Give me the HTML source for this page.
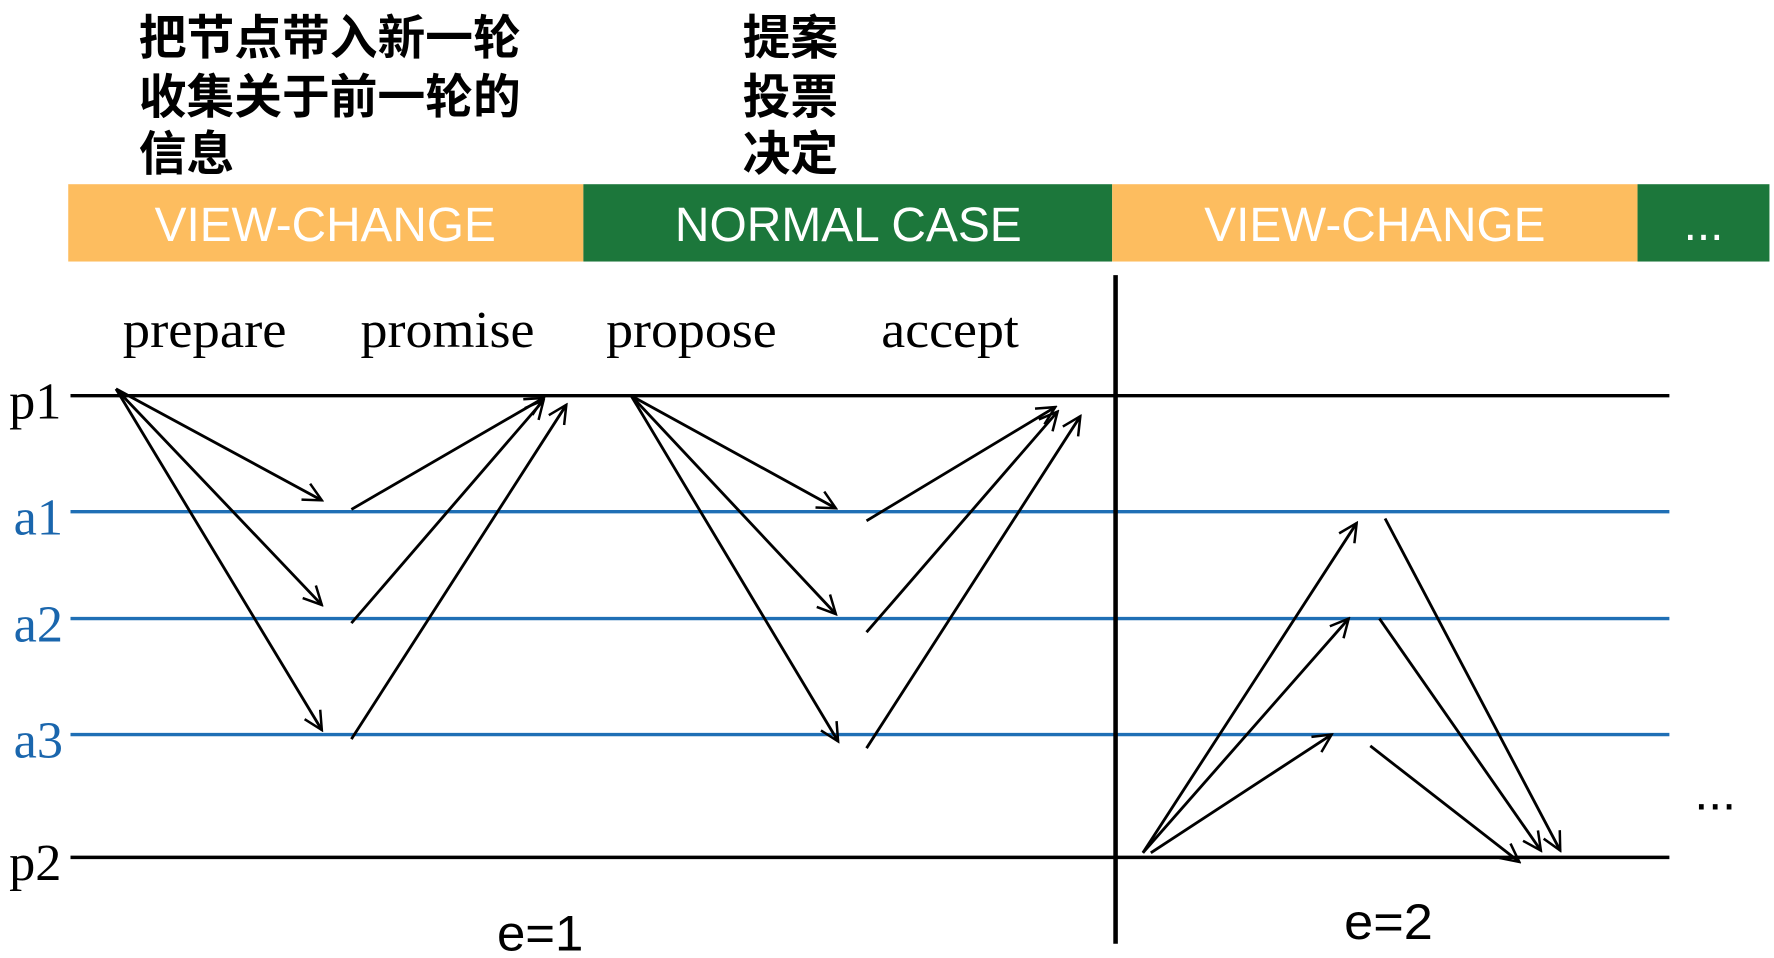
<!DOCTYPE html>
<html><head><meta charset="utf-8"><style>
html,body{margin:0;padding:0;background:#fff;width:1774px;height:958px;overflow:hidden}
svg{display:block}
</style></head><body>
<svg width="1774" height="958" viewBox="0 0 1560 842.5" preserveAspectRatio="none" xmlns="http://www.w3.org/2000/svg">
<defs>
<marker id="a" viewBox="0 0 20 20" refX="18" refY="10" markerWidth="20" markerHeight="20" markerUnits="userSpaceOnUse" orient="auto">
<path d="M2,2 L18,10 L2,18" fill="none" stroke="#000" stroke-width="2.2"/>
</marker>
</defs>
<g font-family="'Liberation Sans','Noto Sans CJK SC',sans-serif" font-size="42" fill="#000" font-weight="bold">
<text x="122" y="48">把节点带入新一轮</text>
<text x="122" y="100">收集关于前一轮的</text>
<text x="122" y="150">信息</text>
<text x="653" y="48">提案</text>
<text x="653" y="100">投票</text>
<text x="653" y="150">决定</text>
</g>
<rect x="60" y="162" width="453" height="68" fill="#fdbd5f"/>
<rect x="513" y="162" width="465" height="68" fill="#1c773b"/>
<rect x="978" y="162" width="462" height="68" fill="#fdbd5f"/>
<rect x="1440" y="162" width="116" height="68" fill="#1c773b"/>
<g font-family="'Liberation Sans',sans-serif" font-size="42" fill="#fff" text-anchor="middle">
<text x="286" y="212" textLength="300" lengthAdjust="spacingAndGlyphs">VIEW-CHANGE</text>
<text x="746" y="212" textLength="305" lengthAdjust="spacingAndGlyphs">NORMAL CASE</text>
<text x="1209" y="212" textLength="300" lengthAdjust="spacingAndGlyphs">VIEW-CHANGE</text>
<text x="1498" y="211">...</text>
</g>
<g font-family="'Liberation Serif',serif" font-size="46" fill="#000">
<text x="108" y="305" textLength="144" lengthAdjust="spacingAndGlyphs">prepare</text>
<text x="317" y="305" textLength="153" lengthAdjust="spacingAndGlyphs">promise</text>
<text x="533" y="305" textLength="150" lengthAdjust="spacingAndGlyphs">propose</text>
<text x="775" y="305" textLength="121" lengthAdjust="spacingAndGlyphs">accept</text>
<text x="8" y="368">p1</text>
<text x="8" y="774">p2</text>
<g fill="#1a66ad"><text x="12" y="470">a1</text><text x="12" y="564">a2</text><text x="12" y="666">a3</text></g>
</g>
<g stroke-width="3">
<line x1="62" y1="348" x2="1468" y2="348" stroke="#000"/>
<line x1="62" y1="754" x2="1468" y2="754" stroke="#000"/>
<g stroke="#1f6fb5"><line x1="62" y1="450" x2="1468" y2="450"/><line x1="62" y1="544" x2="1468" y2="544"/><line x1="62" y1="646" x2="1468" y2="646"/></g>
<line x1="981" y1="242" x2="981" y2="830" stroke="#000" stroke-width="4"/>
</g>
<g stroke="#000" stroke-width="2.5" marker-end="url(#a)">
<line x1="102" y1="342" x2="283" y2="440"/><line x1="102" y1="342" x2="283" y2="532"/><line x1="102" y1="342" x2="283" y2="642"/>
<line x1="309" y1="448" x2="478" y2="350"/><line x1="309" y1="548" x2="478" y2="352"/><line x1="309" y1="650" x2="498" y2="356"/>
<line x1="555" y1="348" x2="735" y2="447"/><line x1="555" y1="348" x2="735" y2="540"/><line x1="555" y1="348" x2="737" y2="652"/>
<line x1="762" y1="458" x2="928" y2="358"/><line x1="762" y1="556" x2="930" y2="362"/><line x1="762" y1="658" x2="950" y2="366"/>
<line x1="1005" y1="750" x2="1193" y2="460"/><line x1="1005" y1="750" x2="1186" y2="544"/><line x1="1012" y1="750" x2="1171" y2="646"/>
<line x1="1218" y1="456" x2="1372" y2="748"/><line x1="1213" y1="544" x2="1355" y2="748"/><line x1="1205" y1="656" x2="1336" y2="758"/>
</g>
<g font-family="'Liberation Sans',sans-serif" font-size="44" fill="#000">
<text x="437" y="836" textLength="76" lengthAdjust="spacingAndGlyphs">e=1</text>
<text x="1182" y="826" textLength="78" lengthAdjust="spacingAndGlyphs">e=2</text>
<text x="1490" y="712">...</text>
</g>
</svg>
</body></html>
